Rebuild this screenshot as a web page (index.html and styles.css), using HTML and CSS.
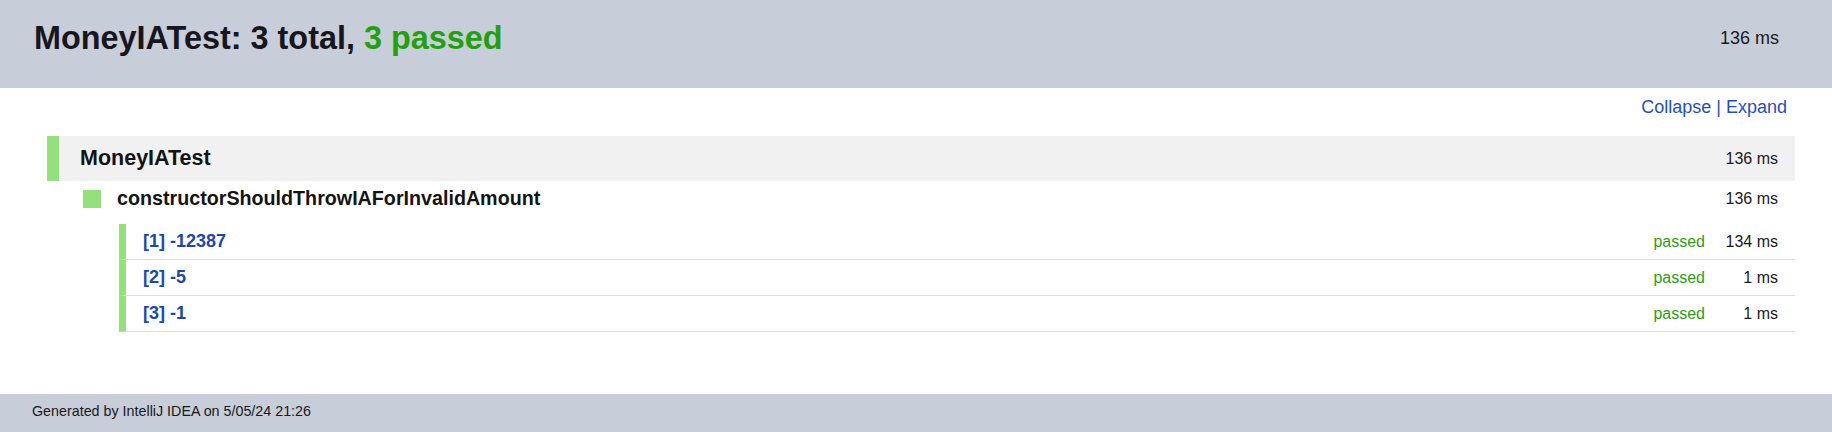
FILE: index.html
```html
<!DOCTYPE html>
<html lang="en">
<head>
<meta charset="utf-8">
<title>Test Results — MoneyIATest</title>
<link rel="stylesheet" href="styles.css">
</head>
<body>
<header class="header">
  <h1 class="title">MoneyIATest: 3 total, <span class="passed-count">3 passed</span></h1>
  <span class="header-time">136 ms</span>
</header>
<main class="content">
  <div class="toolbar"><a class="link" href="#">Collapse</a> | <a class="link" href="#">Expand</a></div>
  <section class="suite">
    <div class="suite-row">
      <span class="suite-name">MoneyIATest</span>
      <span class="time">136 ms</span>
    </div>
    <div class="class-row">
      <span class="square"></span>
      <span class="class-name">constructorShouldThrowIAForInvalidAmount</span>
      <span class="time">136 ms</span>
    </div>
    <div class="tests">
      <div class="test-row">
        <span class="test-name">[1] -12387</span>
        <span class="status">passed</span>
        <span class="test-time">134 ms</span>
      </div>
      <div class="test-row">
        <span class="test-name">[2] -5</span>
        <span class="status">passed</span>
        <span class="test-time">1 ms</span>
      </div>
      <div class="test-row">
        <span class="test-name">[3] -1</span>
        <span class="status">passed</span>
        <span class="test-time">1 ms</span>
      </div>
    </div>
  </section>
</main>
<footer class="footer">Generated by IntelliJ IDEA on 5/05/24 21:26</footer>
</body>
</html>
```

FILE: styles.css
```css
html, body {
  margin: 0;
  padding: 0;
  background: #ffffff;
  font-family: "Liberation Sans", Arial, sans-serif;
  color: #1a1a1a;
}

.header {
  box-sizing: border-box;
  height: 88px;
  background: #c7cdd9;
  display: flex;
  justify-content: space-between;
  align-items: flex-start;
  padding: 20px 53px 0 34px;
}

.title {
  margin: 0;
  font-size: 32.4px;
  font-weight: bold;
  line-height: normal;
  color: #16161c;
}

.passed-count {
  color: #22a00f;
}

.header-time {
  font-size: 18px;
  line-height: normal;
  padding-top: 8px;
  color: #1a1a1a;
}

.content {
  padding: 0 37px 0 47px;
}

.toolbar {
  padding-top: 9px;
  line-height: 21px;
  margin-bottom: 18px;
  font-size: 18px;
  text-align: right;
  padding-right: 8px;
  color: #1f4fc2;
}

.link {
  color: #1f4fc2;
  text-decoration: none;
}

.suite-row {
  box-sizing: border-box;
  height: 45px;
  display: flex;
  align-items: center;
  background: #f1f1f1;
  border-left: 12px solid #94e07a;
  padding: 0 17px 0 21px;
}

.suite-name {
  flex: 1;
  font-size: 21.5px;
  font-weight: bold;
  color: #141414;
}

.time {
  font-size: 16px;
  color: #1a1a1a;
}

.class-row {
  height: 35px;
  display: flex;
  align-items: center;
  padding: 0 17px 0 36px;
}

.square {
  width: 18px;
  height: 18px;
  background: #94e07a;
  margin-right: 16px;
}

.class-name {
  flex: 1;
  font-size: 19.7px;
  font-weight: bold;
  color: #141414;
}

.tests {
  margin: 8px 0 0 72px;
}

.test-row {
  display: flex;
  align-items: center;
  padding: 7px 17px 7px 17px;
  border-left: 7px solid #94e07a;
  border-bottom: 1px solid #dcdcdc;
}

.test-name {
  flex: 1;
  font-size: 18px;
  font-weight: bold;
  color: #1b47b5;
}

.status {
  font-size: 16px;
  color: #2a9f16;
}

.test-time {
  min-width: 53px;
  margin-left: 20px;
  text-align: right;
  font-size: 16px;
  color: #1a1a1a;
}

.footer {
  margin-top: 62px;
  background: #c7cdd9;
  font-size: 14.3px;
  line-height: 16px;
  padding: 9px 31px 15px 32px;
  color: #1a1a1a;
}
```
